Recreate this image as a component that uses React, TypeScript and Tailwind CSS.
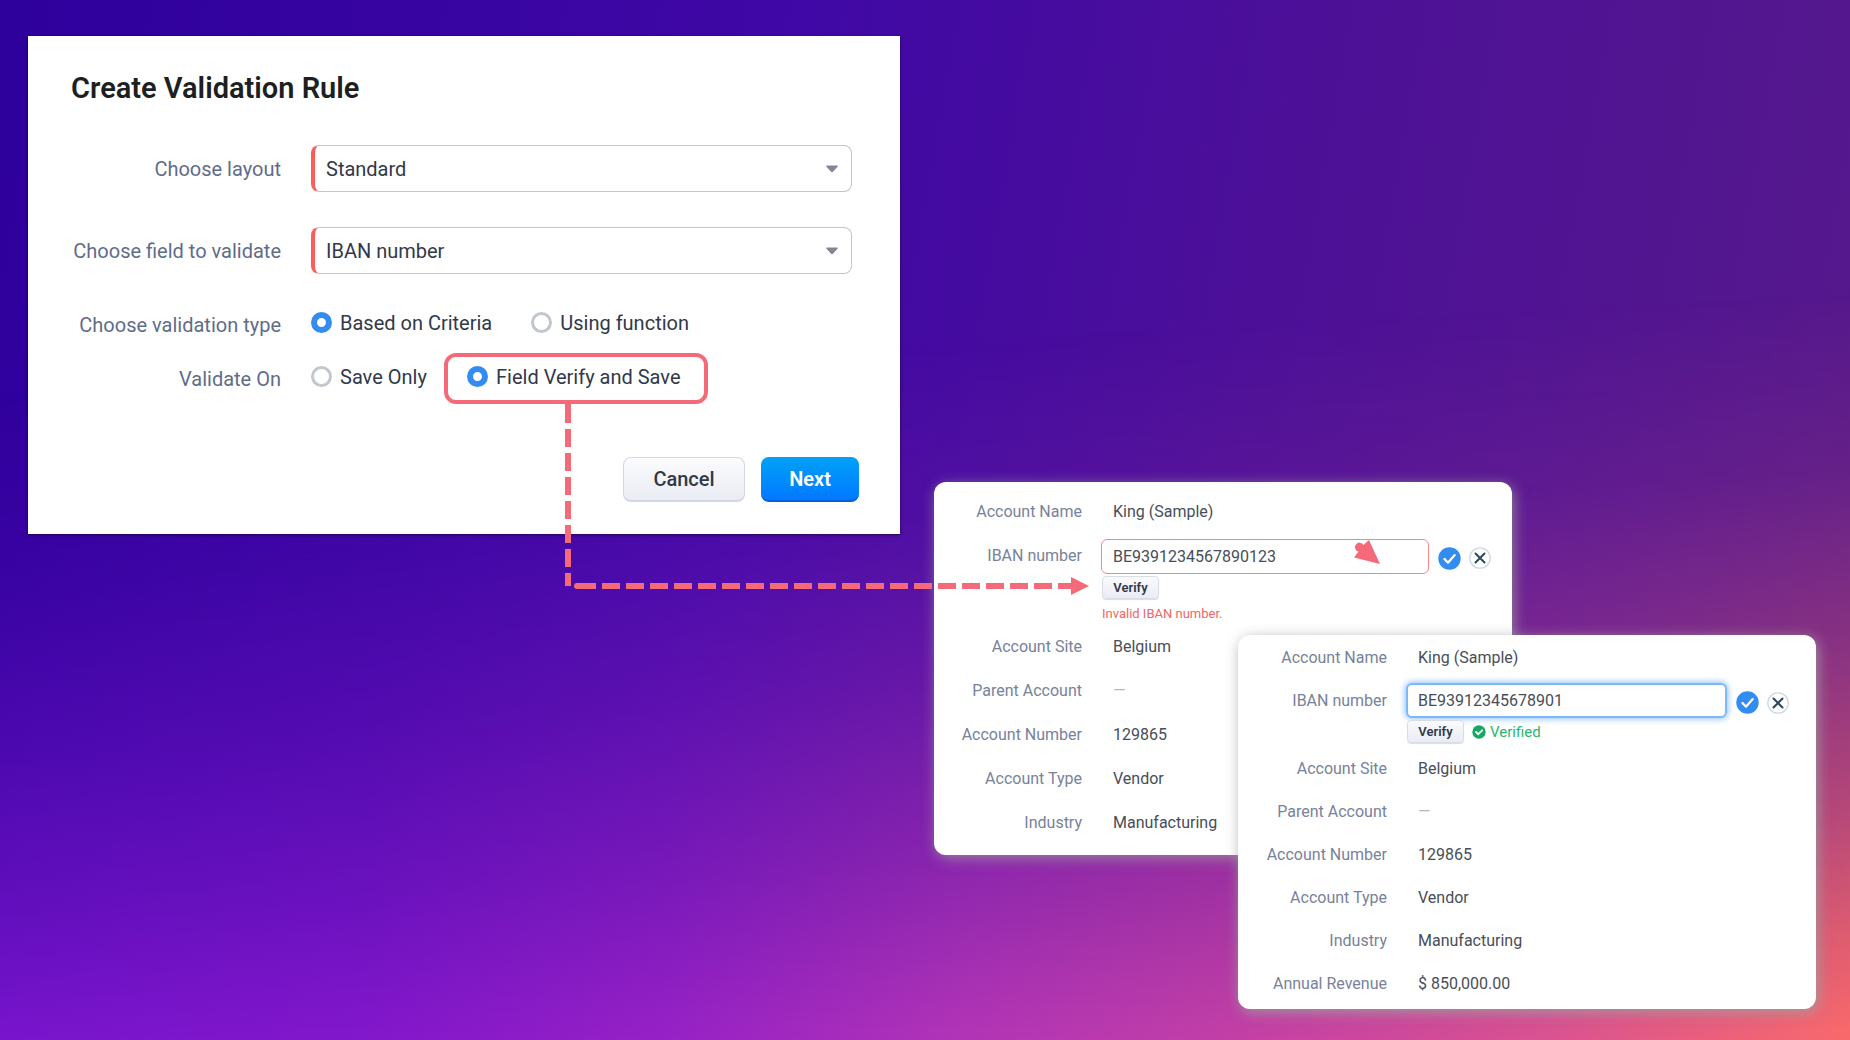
import { useState } from 'react';

interface Field {
  label: string;
  value: string;
}

interface RecordCardProps {
  id: string;
  iban: string;
  verified: boolean;
  fields: Field[];
}

const accountFields: Field[] = [
  { label: 'Account Site', value: 'Belgium' },
  { label: 'Parent Account', value: '—' },
  { label: 'Account Number', value: '129865' },
  { label: 'Account Type', value: 'Vendor' },
  { label: 'Industry', value: 'Manufacturing' },
];

const radioClass =
  'size-[21px] shrink-0 appearance-none rounded-full border-3 border-[#c1c7cf] bg-white checked:border-[6px] checked:border-[#338cf0]';

function SelectBox({ id, label, value }: { id: string; label: string; value: string }) {
  return (
    <>
      <label htmlFor={id} className="text-right text-[#5f6c8a]">{label}</label>
      <div className="relative mr-[48px]">
        <select
          id={id}
          defaultValue={value}
          className="block h-[47px] w-full appearance-none rounded-lg border border-l-4 border-[#bfc6ce] border-l-[#ff5d5a] bg-white pl-[11px] text-[#313949]"
        >
          <option>{value}</option>
        </select>
        <svg className="pointer-events-none absolute top-5 right-[13px]" width="14" height="8" viewBox="0 0 14 8">
          <path d="M2 .5h10q1.500 0 .5 1.300L8 6.800q-1 .9-2 0L1.500 1.800Q.5.500 2 .500z" fill="#818793" />
        </svg>
      </div>
    </>
  );
}

// dashed line from the highlighted option to the Verify button
function Connector() {
  return (
    <svg className="pointer-events-none absolute top-full left-[115px] z-20 mt-1 overflow-visible" width="526" height="192" viewBox="0 0 526 192">
      <path d="M5 -1V182" stroke="#f46a78" strokeWidth="6" strokeDasharray="18 6" strokeDashoffset="-2" fill="none" />
      <path d="M5 -2V4" stroke="#f46a78" strokeWidth="6" />
      <path d="M33 179H14a3 3 0 0 0 0 6H33z" fill="#f46a78" />
      <path d="M39 182H509" stroke="#f46a78" strokeWidth="6" strokeDasharray="18 6" />
      <path d="M508 173L526 182L508 191z" fill="#f46a78" />
    </svg>
  );
}

function RecordCard({ id, iban, verified, fields }: RecordCardProps) {
  const [value, setValue] = useState(iban);
  const row = verified
    ? 'grid grid-cols-[149px_1fr] items-center gap-x-[31px] h-[43px]'
    : 'grid grid-cols-[148px_1fr] items-center gap-x-[31px] h-11';
  const labelClass = 'text-right text-[#77829b]';

  return (
    <>
      <div className={row}>
        <span className={labelClass}>Account Name</span>
        <span>King (Sample)</span>
      </div>
      <div className={row}>
        <label htmlFor={id} className={labelClass}>IBAN number</label>
        <div className={verified ? '-ml-3 flex items-center pr-[19px]' : '-ml-3 flex items-center pr-[13px]'}>
          <input
            id={id}
            type="text"
            value={value}
            onChange={(e) => setValue(e.target.value)}
            className={
              verified
                ? 'h-[35px] min-w-0 flex-1 rounded-md border-2 border-[#7fb8fa] bg-white px-2.5 shadow-[0_0_6px_1px_#8fc0f8] outline-none'
                : 'h-[35px] min-w-0 flex-1 rounded-md border border-[#ff8585] bg-white px-[11px] outline-none'
            }
          />
          <button type="button" aria-label="Save" className="ml-[9px] pt-1">
            <svg width="23" height="23" viewBox="0 0 23 23">
              <circle cx="11.500" cy="11.500" r="11.200" fill="#338cf0" />
              <path d="M6.500 12l3.500 3.700 6.700-7.600" stroke="#fff" strokeWidth="2.200" fill="none" strokeLinecap="round" strokeLinejoin="round" />
            </svg>
          </button>
          <button type="button" aria-label="Discard" className="mx-2 pt-1">
            <svg width="22" height="22" viewBox="0 0 22 22">
              <circle cx="11" cy="11" r="10.200" fill="#fff" stroke="#cfd8e0" strokeWidth="1.300" />
              <path d="M6.500 6.500l9 9M15.500 6.500l-9 9" stroke="#2b475c" strokeWidth="2" strokeLinecap="round" />
            </svg>
          </button>
        </div>
      </div>
      <div className={verified ? 'ml-[169px] flex h-[25px] items-start' : 'ml-[168px] flex h-[47px] flex-col items-start'}>
        <button
          type="button"
          className="-mt-0.5 h-[23px] w-[57px] rounded-sm border border-[#d9dde7] bg-linear-to-b from-[#fafbfd] to-[#e9ecf4] text-[13px] leading-5 font-semibold text-[#313949] shadow-[0_1px_1px_#d9dde7]"
        >
          Verify
        </button>
        {verified ? (
          <span className="-mt-0.5 ml-2 flex h-[23px] items-center gap-1 text-[15px] text-[#2cb56e]">
            <svg width="14" height="14" viewBox="0 0 14 14">
              <circle cx="7" cy="7" r="6.700" fill="#14a862" />
              <path d="M4 7l2.200 2.200 3.900-3.900" stroke="#fff" strokeWidth="1.800" fill="none" strokeLinecap="round" />
            </svg>
            Verified
          </span>
        ) : (
          <p className="mt-[5px] text-[13px] leading-5 text-[#f06565]">Invalid IBAN number.</p>
        )}
      </div>
      {fields.map((field) => (
        <div key={field.label} className={row}>
          <span className={labelClass}>{field.label}</span>
          <span className={field.value === '—' ? 'text-[#b5b9bf]' : ''}>{field.value}</span>
        </div>
      ))}
    </>
  );
}

export default function App() {
  const [type, setType] = useState('criteria');
  const [validateOn, setValidateOn] = useState('verify');

  return (
    <main className="relative min-h-screen bg-[linear-gradient(100deg,#2e009c_0%,#4008a6_40%,#4c1098_65%,#571a8a_100%)] pt-9 pr-[34px] pb-8 pl-7 font-[Roboto,'Liberation_Sans',sans-serif]">
      {/* warm glow rising from the bottom edge */}
      <div className="pointer-events-none absolute inset-0 bg-[linear-gradient(to_right,#8418d4_0%,#8c1ad0_20%,#9f24c8_36%,#b937b8_52%,#c842a6_67%,#dc5490_84%,#f8696b_100%)] [mask-image:linear-gradient(177deg,transparent_34%,#0000001a_50%,#00000050_65%,#00000098_80%,#000000d8_91%,#000_99%)]" />
      <div className="relative grid grid-cols-[872fr_882fr] items-start gap-[34px]">
        <form
          onSubmit={(e) => e.preventDefault()}
          className="bg-white pt-9 pb-8 pl-[43px] text-[20px] leading-6 text-[#313949] shadow-[0_1px_3px_#00000080]"
        >
          <h1 className="text-[29px] leading-8 font-semibold text-[#1d1f22]">Create Validation Rule</h1>
          <div className="mt-[41px] grid grid-cols-[210px_1fr] items-center gap-x-[30px] whitespace-nowrap">
            <SelectBox id="layout" label="Choose layout" value="Standard" />
            <div className="col-span-2 h-[35px]" />
            <SelectBox id="field" label="Choose field to validate" value="IBAN number" />
            <div className="col-span-2 h-[25px]" />
            <span id="type-label" className="text-right text-[#5f6c8a]">Choose validation type</span>
            <div role="radiogroup" aria-labelledby="type-label" className="flex h-[51px] items-center gap-[39px] pb-1">
              <label className="flex items-center gap-2">
                <input type="radio" name="type" checked={type === 'criteria'} onChange={() => setType('criteria')} className={radioClass} />
                Based on Criteria
              </label>
              <label className="flex items-center gap-2">
                <input type="radio" name="type" checked={type === 'function'} onChange={() => setType('function')} className={radioClass} />
                Using function
              </label>
            </div>
            <div className="col-span-2 h-[3px]" />
            <span id="on-label" className="text-right text-[#5f6c8a]">Validate On</span>
            <div role="radiogroup" aria-labelledby="on-label" className="flex h-[51px] items-center">
              <label className="flex w-[133px] items-center gap-2 pb-1">
                <input type="radio" name="on" checked={validateOn === 'save'} onChange={() => setValidateOn('save')} className={radioClass} />
                Save Only
              </label>
              <div className="relative flex h-[51px] w-[264px] items-center rounded-xl border-4 border-[#f46a78] pb-1 pl-[19px]">
                <label className="flex items-center gap-2">
                  <input type="radio" name="on" checked={validateOn === 'verify'} onChange={() => setValidateOn('verify')} className={radioClass} />
                  Field Verify and Save
                </label>
                <Connector />
              </div>
            </div>
          </div>
          <div className="mt-[53px] mr-[41px] flex justify-end gap-4">
            <button
              type="button"
              className="h-[45px] w-[122px] rounded-lg border border-b-2 border-[#d3d7e2] bg-linear-to-b from-[#fcfcfe] to-[#e9ecf4] font-medium"
            >
              Cancel
            </button>
            <button
              type="submit"
              className="h-[45px] w-[98px] rounded-lg border-b-2 border-[#0062d6] bg-linear-to-b from-[#03a1f8] to-[#0078ff] font-semibold text-white"
            >
              Next
            </button>
          </div>
        </form>

        <div className="pt-[446px] text-[16px] leading-5 text-[#474e59]">
          <section className="relative h-[373px] w-[66%] max-w-[578px] rounded-xl bg-white pt-2 shadow-[2px_3px_14px_#a0a0a0c0]">
            <RecordCard id="iban-invalid" iban="BE9391234567890123" verified={false} fields={accountFields} />
            <svg className="pointer-events-none absolute top-[57px] left-[420px]" width="26" height="26" viewBox="0 0 26 26">
              <path d="M15 1L26 25L0 18.500L4.500 12.500A4.500 4.500 0 1 1 9.500 6z" fill="#f46a78" />
            </svg>
          </section>
          <section className="relative -mt-[220px] ml-auto w-[66%] max-w-[578px] rounded-xl bg-white pt-px pb-1 shadow-[2px_3px_14px_#a0a0a0e0]">
            <RecordCard
              id="iban-valid"
              iban="BE93912345678901"
              verified
              fields={[...accountFields, { label: 'Annual Revenue', value: '$ 850,000.00' }]}
            />
          </section>
        </div>
      </div>
    </main>
  );
}
